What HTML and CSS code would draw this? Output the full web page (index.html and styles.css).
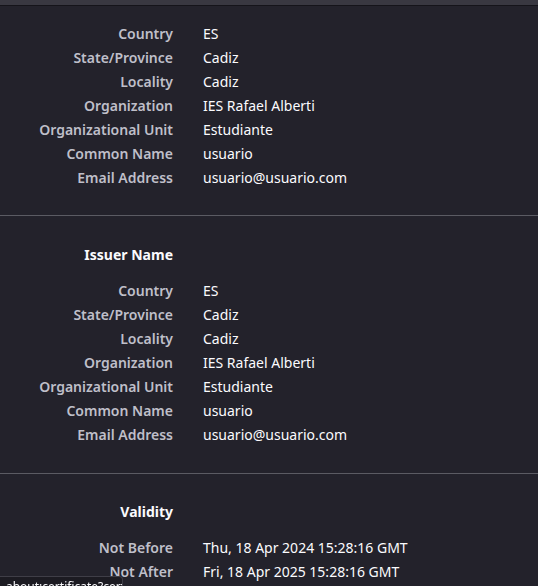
FILE: index.html
```html
<!DOCTYPE html>
<html>
<head>
<meta charset="utf-8">
<link rel="stylesheet" href="styles.css">
</head>
<body>
<div class="topbar"></div>
<section class="info first">
  <div class="grid">
    <div class="label">Country</div><div class="value">ES</div>
    <div class="label">State/Province</div><div class="value">Cadiz</div>
    <div class="label">Locality</div><div class="value">Cadiz</div>
    <div class="label">Organization</div><div class="value">IES Rafael Alberti</div>
    <div class="label">Organizational Unit</div><div class="value">Estudiante</div>
    <div class="label">Common Name</div><div class="value">usuario</div>
    <div class="label">Email Address</div><div class="value">usuario@usuario.com</div>
  </div>
</section>
<section class="info second">
  <div class="grid heading-grid"><div class="heading">Issuer Name</div><div></div></div>
  <div class="grid">
    <div class="label">Country</div><div class="value">ES</div>
    <div class="label">State/Province</div><div class="value">Cadiz</div>
    <div class="label">Locality</div><div class="value">Cadiz</div>
    <div class="label">Organization</div><div class="value">IES Rafael Alberti</div>
    <div class="label">Organizational Unit</div><div class="value">Estudiante</div>
    <div class="label">Common Name</div><div class="value">usuario</div>
    <div class="label">Email Address</div><div class="value">usuario@usuario.com</div>
  </div>
</section>
<section class="info last">
  <div class="grid heading-grid"><div class="heading">Validity</div><div></div></div>
  <div class="grid">
    <div class="label">Not Before</div><div class="value">Thu, 18 Apr 2024 15:28:16 GMT</div>
    <div class="label">Not After</div><div class="value">Fri, 18 Apr 2025 15:28:16 GMT</div>
  </div>
</section>
<div class="status">about:certificate?cert=MIID</div>
</body>
</html>
```
FILE: styles.css
```css
html, body {
  margin: 0;
  padding: 0;
  background: #23222b;
  height: 100%;
  overflow: hidden;
}
body {
  font-family: "Noto Sans", "Open Sans", sans-serif;
  font-size: 14px;
  color: #fbfbfe;
}
.topbar {
  height: 5px;
  background: #393841;
  border-bottom: 1px solid #15141a;
}
.info {
  padding: 26px 0 26px;
  border-bottom: 1px solid #5b5b63;
}
.info.first {
  padding-top: 16px;
  padding-bottom: 25px;
}
.info.second {
  padding-top: 27px;
}
.info.last {
  border-bottom: none;
}
.grid {
  display: grid;
  grid-template-columns: 173px 1fr;
  column-gap: 30px;
  line-height: 24px;
}
.heading-grid {
  margin-bottom: 12px;
}
.heading {
  text-align: right;
  font-weight: 700;
  color: #fbfbfe;
}
.label {
  text-align: right;
  font-weight: 600;
  color: #bfbfc9;
}
.value {
  color: #fbfbfe;
  white-space: nowrap;
}
.status {
  position: fixed;
  left: 0;
  bottom: -10px;
  width: 112px;
  height: 16px;
  padding: 2px 4px 0 6px;
  background: #1c1b22;
  border: 1px solid #3f3e47;
  border-left: none;
  border-top-right-radius: 4px;
  font-size: 12px;
  line-height: 16px;
  color: #fbfbfe;
  overflow: hidden;
  white-space: nowrap;
}
```
